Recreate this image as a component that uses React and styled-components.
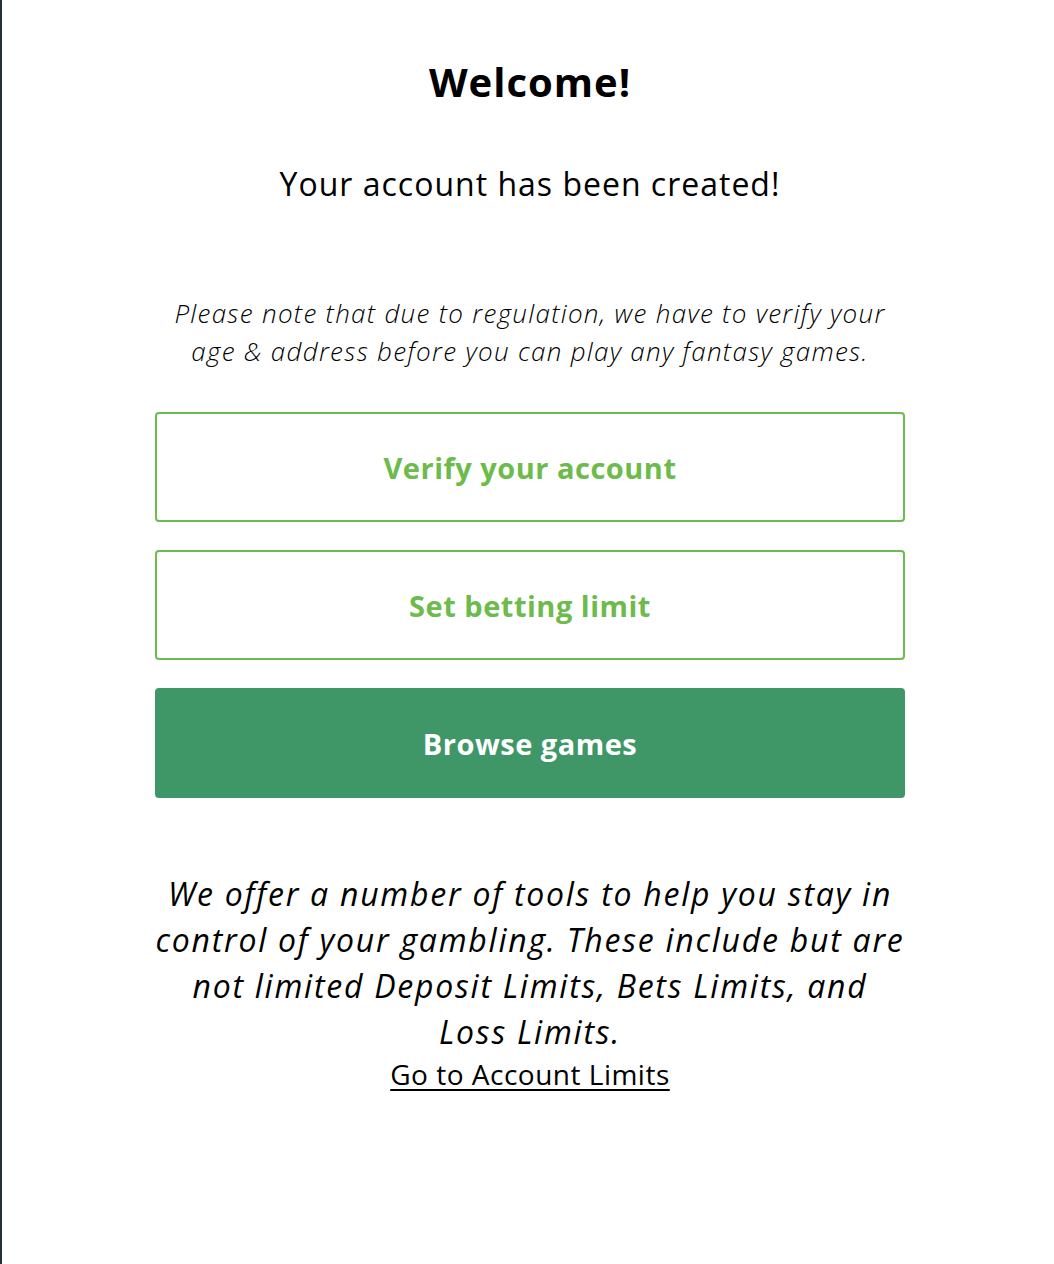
import React from "react";
import styled, { createGlobalStyle } from "styled-components";

const GlobalStyle = createGlobalStyle`
  html, body {
    margin: 0;
    padding: 0;
    background: #ffffff;
  }
  body {
    font-family: "Open Sans", "Noto Sans", sans-serif;
    color: #000;
  }
`;

const Page = styled.div`
  min-height: 1264px;
  box-sizing: border-box;
  border-left: 2px solid #26303b;
  padding: 55px 149px 0 153px;
`;

const Column = styled.div`
  width: 750px;
  display: flex;
  flex-direction: column;
  align-items: stretch;
  text-align: center;
`;

const Title = styled.h1`
  margin: 0;
  font-size: 40px;
  font-weight: 700;
  line-height: 54px;
  letter-spacing: 1px;
`;

const Subtitle = styled.p`
  margin: 53px 0 0;
  font-size: 32px;
  font-weight: 400;
  line-height: 44px;
  letter-spacing: 1px;
`;

const Note = styled.p`
  margin: 88px 0 0;
  font-size: 26px;
  font-style: italic;
  font-weight: 300;
  line-height: 38px;
  letter-spacing: 1.3px;
`;

const Actions = styled.div`
  margin-top: 42px;
  display: flex;
  flex-direction: column;
  gap: 28px;
`;

const ActionButton = styled.button`
  height: 110px;
  border-radius: 4px;
  border: 2px solid ${(p) => (p.$filled ? "#3f9768" : "#6cbb4c")};
  background: ${(p) => (p.$filled ? "#3f9768" : "#ffffff")};
  color: ${(p) => (p.$filled ? "#ffffff" : "#6cbb4c")};
  font-family: "Open Sans", "Noto Sans", sans-serif;
  font-size: 29px;
  font-weight: 700;
  letter-spacing: 0.5px;
  cursor: pointer;
`;

const Info = styled.p`
  margin: 73px 0 0;
  font-size: 32px;
  font-style: italic;
  font-weight: 400;
  line-height: 46px;
  letter-spacing: 1.75px;
`;

const LimitsLink = styled.a`
  align-self: center;
  font-size: 28px;
  line-height: 38px;
  letter-spacing: 0.5px;
  color: #000;
  text-decoration: underline;
  text-underline-offset: 4px;
  text-decoration-thickness: 2px;
`;

export default function App() {
  return (
    <>
      <GlobalStyle />
      <Page>
        <Column>
          <Title>Welcome!</Title>
          <Subtitle>Your account has been created!</Subtitle>
          <Note>
            Please note that due to regulation, we have to verify your age &amp;
            address before you can play any fantasy games.
          </Note>
          <Actions>
            <ActionButton>Verify your account</ActionButton>
            <ActionButton>Set betting limit</ActionButton>
            <ActionButton $filled>Browse games</ActionButton>
          </Actions>
          <Info>
            We offer a number of tools to help you stay in control of your
            gambling. These include but are not limited Deposit Limits, Bets
            Limits, and Loss Limits.
          </Info>
          <LimitsLink href="#">Go to Account Limits</LimitsLink>
        </Column>
      </Page>
    </>
  );
}
